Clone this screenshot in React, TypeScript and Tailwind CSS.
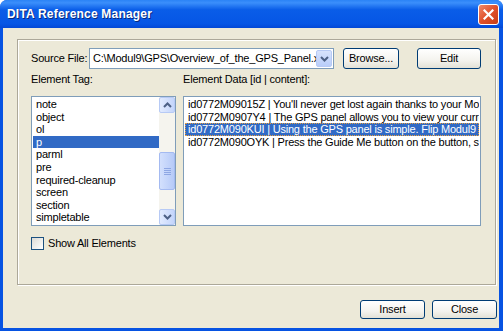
import { useState } from 'react';

const tags = ['note', 'object', 'ol', 'p', 'parml', 'pre', 'required-cleanup', 'screen', 'section', 'simpletable'];

const rows = [
  "id0772M09015Z | You'll never get lost again thanks to your Modul9's GPS panel.",
  'id0772M0907Y4 | The GPS panel allows you to view your current position.',
  'id0772M090KUI | Using the GPS panel is simple. Flip Modul9 to the GPS panel.',
  'id0772M090OYK | Press the Guide Me button on the button, select a destination.',
];

function XpButton({ label, className }: { label: string; className: string }) {
  // Luna style push button
  return (
    <button
      className={`shrink-0 flex items-center justify-center rounded-[3px] border border-[#003C74] bg-[linear-gradient(#FFFFFF,#F4F3EE_60%,#E3E1D6)] text-[11px] text-black ${className}`}
    >
      {label}
    </button>
  );
}

function Chevron({ up }: { up?: boolean }) {
  return (
    <svg width="9" height="6" viewBox="0 0 9 6">
      <path
        d={up ? 'M1 5 L4.5 1.5 L8 5' : 'M1 1 L4.5 4.5 L8 1'}
        fill="none"
        stroke="#4D6185"
        strokeWidth="2"
      />
    </svg>
  );
}

export default function App() {
  const [showAll, setShowAll] = useState(false);
  const [tag, setTag] = useState('p');
  const [row, setRow] = useState(2);

  return (
    <div className="w-[503px] h-[331px] flex flex-col overflow-hidden rounded-t-[7px] bg-[#0753E2] font-['Liberation_Sans',Arial,sans-serif] text-[11px] tracking-[-0.2px] text-black">
      {/* title bar */}
      <div className="h-[28px] shrink-0 flex items-center justify-between pl-[7px] pr-[4px] bg-[linear-gradient(#2B83F6_0%,#3B8FFB_10%,#0A5DE8_35%,#0656E5_85%,#0348D6_100%)]">
        <span className="text-[12px] font-bold text-white [text-shadow:1px_1px_0_#0A2A7A] tracking-[0.2px]">
          DITA Reference Manager
        </span>
        <div className="w-[21px] h-[21px] rounded-[3px] border border-white bg-[linear-gradient(135deg,#F08A6C,#E0502A_50%,#C73D17)] flex items-center justify-center">
          <svg width="11" height="11" viewBox="0 0 11 11">
            <path d="M1.5 1.5 L9.5 9.5 M9.5 1.5 L1.5 9.5" stroke="white" strokeWidth="2.2" strokeLinecap="square" />
          </svg>
        </div>
      </div>

      {/* client area */}
      <div className="flex-1 flex flex-col ml-[3px] mr-[4px] mb-[3px] bg-[#ECE9D8]">
        {/* group box */}
        <div className="mt-[11px] ml-[14px] mr-[3px] h-[246px] border border-[#ACA899] shadow-[1px_1px_0_#ffffff,inset_1px_1px_0_#ffffff] flex flex-col pl-[13px]">
          {/* source file row */}
          <div className="mt-[8px] flex items-center h-[21px]">
            <span className="w-[58px] shrink-0 whitespace-nowrap">Source File:</span>
            <div className="w-[245px] shrink-0 h-[21px] flex items-center border border-[#7F9DB9] bg-white">
              <span className="flex-1 overflow-hidden whitespace-nowrap pl-[3px] leading-[19px]">
                C:\Modul9\GPS\Overview_of_the_GPS_Panel.xml
              </span>
              <div className="w-[16px] shrink-0 h-[17px] mr-[1px] rounded-[2px] border border-[#B7CAF5] bg-[linear-gradient(#D7E3FD,#B9CDF9)] flex items-center justify-center">
                <Chevron />
              </div>
            </div>
            <XpButton label="Browse..." className="ml-[9px] w-[56px] h-[21px]" />
            <XpButton label="Edit" className="ml-[18px] w-[64px] h-[21px]" />
          </div>

          {/* labels */}
          <div className="mt-[3px] flex h-[14px] items-center">
            <span className="w-[152px] shrink-0">Element Tag:</span>
            <span>Element Data [id | content]:</span>
          </div>

          {/* lists */}
          <div className="mt-[10px] flex">
            <div className="w-[145px] shrink-0 h-[130px] border border-[#7F9DB9] bg-white flex">
              <div className="flex-1 pt-[1px] pl-[1px] overflow-hidden">
                {tags.map(t => (
                  <div
                    key={t}
                    onClick={() => setTag(t)}
                    className={`h-[12.6px] leading-[12.6px] pl-[3px] whitespace-nowrap ${t === tag ? 'bg-[#316AC5] text-white' : ''}`}
                  >
                    {t}
                  </div>
                ))}
              </div>
              {/* scrollbar */}
              <div className="w-[16px] h-full flex flex-col bg-[#F5F4EE]">
                <div className="h-[16px] rounded-[2px] border border-[#B7CAF5] bg-[linear-gradient(90deg,#E2EBFE,#C4D5FB)] flex items-center justify-center">
                  <Chevron up />
                </div>
                <div className="mt-[39px] h-[38px] rounded-[2px] border border-[#A4BAF1] bg-[linear-gradient(90deg,#D3E0FD,#B6CAF8)] flex flex-col items-center justify-center gap-[1px]">
                  <div className="w-[7px] h-[1px] bg-[#8EA7E4]" />
                  <div className="w-[7px] h-[1px] bg-[#8EA7E4]" />
                  <div className="w-[7px] h-[1px] bg-[#8EA7E4]" />
                  <div className="w-[7px] h-[1px] bg-[#8EA7E4]" />
                </div>
                <div className="flex-1" />
                <div className="h-[16px] rounded-[2px] border border-[#B7CAF5] bg-[linear-gradient(90deg,#E2EBFE,#C4D5FB)] flex items-center justify-center">
                  <Chevron />
                </div>
              </div>
            </div>

            <div className="ml-[7px] w-[298px] shrink-0 h-[130px] border border-[#7F9DB9] bg-white pt-[1px] px-[1px] overflow-hidden">
              {rows.map((r, i) => (
                <div
                  key={r}
                  onClick={() => setRow(i)}
                  className={`h-[12.6px] leading-[12px] pl-[3px] whitespace-nowrap overflow-hidden ${i === row ? 'bg-[#316AC5] text-white outline-1 outline-dotted outline-[#E8A040] -outline-offset-1' : ''}`}
                >
                  {r}
                </div>
              ))}
            </div>
          </div>

          {/* checkbox */}
          <label className="mt-[11px] flex items-center gap-[4px] h-[13px]">
            <span
              onClick={() => setShowAll(!showAll)}
              className="w-[13px] h-[13px] border border-[#1C5180] bg-[linear-gradient(135deg,#DCDBD5,#FFFFFF)] flex items-center justify-center"
            >
              {showAll && <span className="text-[9px] text-[#21A121]">✓</span>}
            </span>
            <span>Show All Elements</span>
          </label>
        </div>

        {/* bottom buttons */}
        <div className="mt-[15px] flex justify-end pr-[2px]">
          <XpButton label="Insert" className="w-[65px] h-[19px]" />
          <XpButton label="Close" className="ml-[7px] w-[65px] h-[19px]" />
        </div>
      </div>
    </div>
  );
}
